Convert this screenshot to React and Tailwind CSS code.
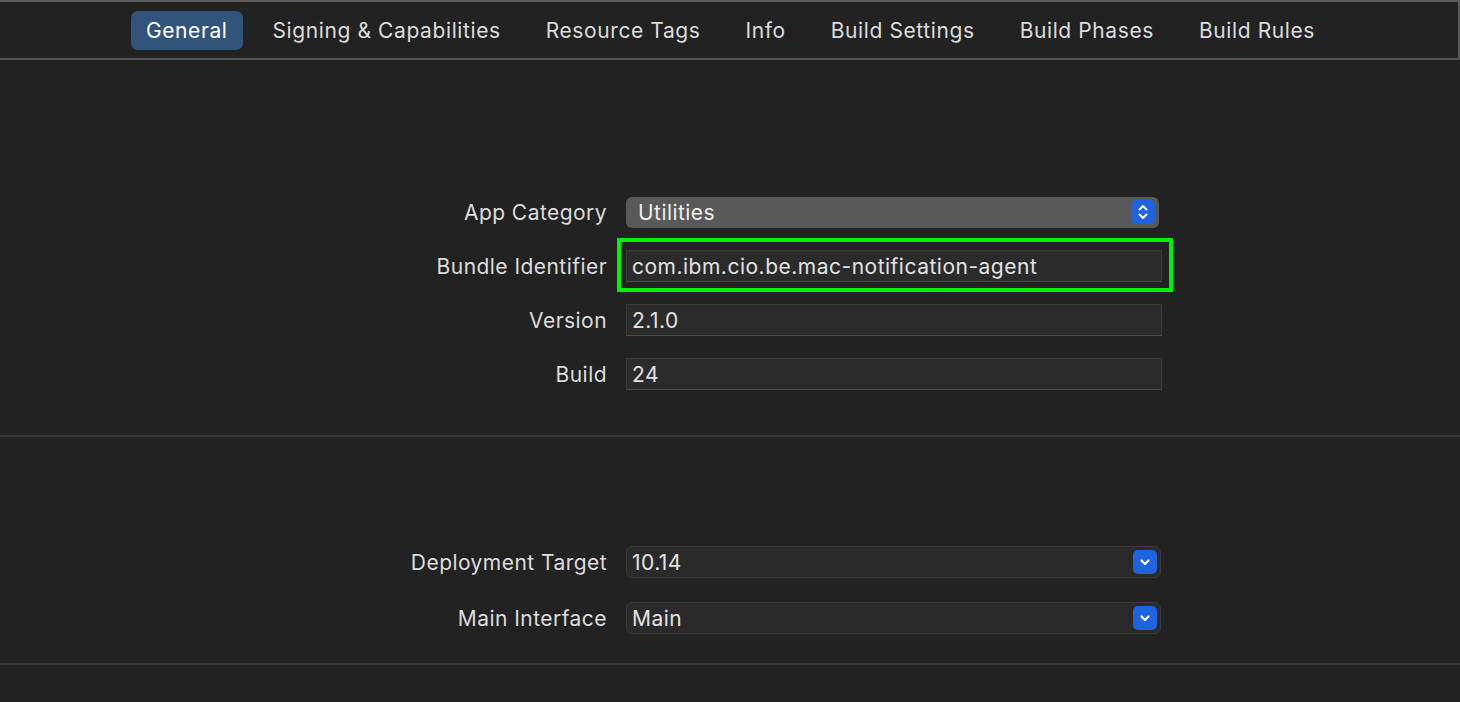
import React from "react";

const font = { fontFamily: "Inter, 'Noto Sans', sans-serif" };

function Stepper() {
  return (
    <div className="w-6 h-6 rounded-[5px] bg-[#1f63e0] flex items-center justify-center">
      <svg width="12" height="18" viewBox="0 0 12 18" fill="none" stroke="white" strokeWidth="2" strokeLinecap="round" strokeLinejoin="round">
        <path d="M2.5 6.5 L6 3 L9.5 6.5" />
        <path d="M2.5 11.5 L6 15 L9.5 11.5" />
      </svg>
    </div>
  );
}

function Chevron() {
  return (
    <div className="w-6 h-6 rounded-[5px] bg-[#1f63e0] flex items-center justify-center">
      <svg width="12" height="10" viewBox="0 0 12 10" fill="none" stroke="white" strokeWidth="2.2" strokeLinecap="round" strokeLinejoin="round">
        <path d="M2.5 3.5 L6 7 L9.5 3.5" />
      </svg>
    </div>
  );
}

function Row({ label, h = "h-[54px]", children }) {
  return (
    <div className={`flex items-center ${h}`}>
      <div className="w-[607px] pt-[2px] text-right text-[21px] tracking-[0.45px] text-[#dcdcdc]">{label}</div>
      <div className="ml-[19px] w-[536px] relative">{children}</div>
    </div>
  );
}

function Field({ value }) {
  return (
    <div className="h-8 bg-[#2c2b2c] border border-[#3a393a] border-b-[#4d4c4d] flex items-center pl-[5px] pt-[2px] text-[21px] tracking-[0.5px] text-[#e2e2e2]">
      {value}
    </div>
  );
}

function Popup({ value }) {
  return (
    <div className="h-8 w-[535px] rounded-[6px] bg-[#2b2a2b] border border-[#3c3b3c] flex items-center justify-between pl-[5px] pr-[3px] text-[21px] tracking-[0.45px] text-[#e2e2e2]">
      <span className="pt-[2px]">{value}</span>
      <Chevron />
    </div>
  );
}

export default function App() {
  const tabs = ["General", "Signing & Capabilities", "Resource Tags", "Info", "Build Settings", "Build Phases", "Build Rules"];
  return (
    <div className="w-[1460px] h-[702px] bg-[#232223] overflow-hidden" style={font}>
      <div className="h-[2px] bg-[#5c5b5c]" />
      <div className="h-[56px] flex items-center pl-[131px] gap-[15px] border-r-2 border-[#5c5b5c]">
        {tabs.map((t, i) => (
          <div
            key={t}
            className={`h-[39px] px-[15px] pt-[2px] flex items-center text-[21px] tracking-[0.6px] ${i === 0 ? "bg-[#33547a] text-white rounded-[7px]" : "text-[#dcdcdc]"}`}
          >
            {t}
          </div>
        ))}
      </div>
      <div className="h-[2px] bg-[#555455]" />

      <div className="pt-[125px] pb-[34px]">
        <Row label="App Category">
          <div className="h-[31px] w-[533px] rounded-[6px] bg-[#5a595a] flex items-center justify-between pl-[12px] pr-[4px] text-[21px] tracking-[0.45px] text-[#ececec]">
            <span className="pt-[2px]">Utilities</span>
            <Stepper />
          </div>
        </Row>
        <Row label="Bundle Identifier">
          <Field value="com.ibm.cio.be.mac-notification-agent" />
          <div className="absolute left-[-9px] right-[-11px] top-[-12px] bottom-[-10px] border-4 border-[#00f000] pointer-events-none" />
        </Row>
        <Row label="Version">
          <Field value="2.1.0" />
        </Row>
        <Row label="Build">
          <Field value="24" />
        </Row>
      </div>
      <div className="h-[2px] bg-[#383738]" />

      <div className="pt-[97px] pb-[17px]">
        <Row label="Deployment Target" h="h-[56px]">
          <Popup value="10.14" />
        </Row>
        <Row label="Main Interface" h="h-[56px]">
          <Popup value="Main" />
        </Row>
      </div>
      <div className="h-[2px] bg-[#383738]" />
    </div>
  );
}
